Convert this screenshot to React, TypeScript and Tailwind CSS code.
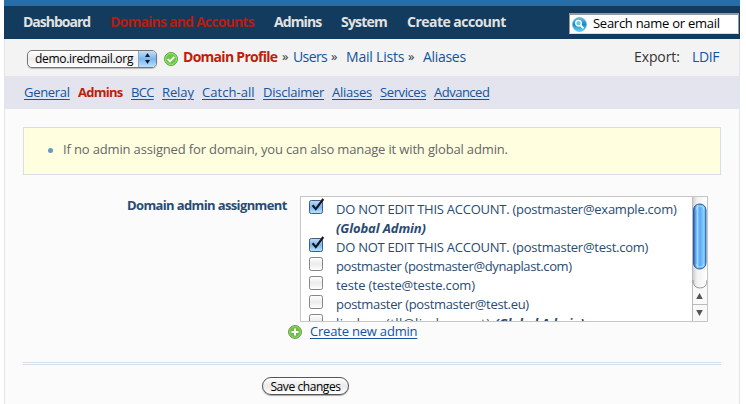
import React from "react";

function Check({ on }: { on?: boolean }) {
  return (
    <svg width="20" height="19" viewBox="0 0 20 19" className="shrink-0">
      <defs>
        <linearGradient id="boxOn" x1="0" y1="0" x2="0" y2="1">
          <stop offset="0" stopColor="#c3dcf3" />
          <stop offset="0.5" stopColor="#7db5ea" />
          <stop offset="1" stopColor="#b9eaff" />
        </linearGradient>
        <linearGradient id="boxOff" x1="0" y1="0" x2="0" y2="1">
          <stop offset="0" stopColor="#ffffff" />
          <stop offset="0.5" stopColor="#ececec" />
          <stop offset="1" stopColor="#ffffff" />
        </linearGradient>
      </defs>
      <rect x="0.5" y="3.5" width="13" height="13" rx="1.8" fill={on ? "url(#boxOn)" : "url(#boxOff)"} stroke={on ? "#435b86" : "#858585"} />
      {on && <path d="M3.6 8.3 6.8 12.1 14.3 2" fill="none" stroke="#10151f" strokeWidth="2.1" />}
    </svg>
  );
}

const accounts = [
  { text: "DO NOT EDIT THIS ACCOUNT. (postmaster@example.com)", on: true, global: true, cls: "tracking-[-0.25px]" },
  { text: "DO NOT EDIT THIS ACCOUNT. (postmaster@test.com)", on: true, cls: "tracking-[-0.25px]" },
  { text: "postmaster (postmaster@dynaplast.com)", cls: "tracking-[-0.38px]" },
  { text: "teste (teste@teste.com)", cls: "tracking-[-0.15px]" },
  { text: "postmaster (postmaster@test.eu)", cls: "tracking-[-0.32px]" },
];

function Tab({ w, children, active }: { w: string; children: string; active?: boolean }) {
  return (
    <span className={`${w} shrink-0 ${active ? "font-bold text-[#bf1d09]" : "text-[#0f55a0] underline underline-offset-2"}`}>{children}</span>
  );
}

export default function App() {
  return (
    <div className="h-[404px] w-[746px] overflow-hidden whitespace-nowrap bg-white pl-1 font-['Open_Sans','Noto_Sans',sans-serif] text-[13px] leading-[19px] text-[#294b72]">
      <div className="h-[6px] w-[736px] bg-[#286da5]" />
      <header className="flex h-[33px] w-[736px] items-center bg-[#123b5d] text-[14px] font-bold text-[#e2e2e2]">
        <nav className="flex pb-[2px] pl-[19px]">
          <span className="w-[87px] tracking-[-1px]">Dashboard</span>
          <span className="w-[164px] tracking-[-0.79px] text-[#b71c10]">Domains and Accounts</span>
          <span className="w-[67px] tracking-[-0.9px]">Admins</span>
          <span className="w-[66px] tracking-[-0.8px]">System</span>
          <span className="w-[162px] tracking-[-0.52px]">Create account</span>
        </nav>
        <div className="mt-[2px] flex h-[21px] w-[170px] items-center border border-t-2 border-[#999] border-b-[#ddd] bg-white pl-[2px] text-[13px] font-normal text-black">
          <svg width="15" height="15" viewBox="0 0 15 15" className="mr-[6px]">
            <defs>
              <linearGradient id="find" x1="0" y1="0" x2="0" y2="1">
                <stop offset="0" stopColor="#72b9dc" />
                <stop offset="0.5" stopColor="#188bc6" />
                <stop offset="1" stopColor="#65d6fa" />
              </linearGradient>
            </defs>
            <circle cx="7.5" cy="7.5" r="7" fill="url(#find)" stroke="#5eb4d8" strokeWidth=".7" />
            <circle cx="6.5" cy="6.2" r="2.8" fill="#71c7ed" stroke="white" strokeWidth="1.3" />
            <path d="m8.7 8.5 2.8 2.9" stroke="white" strokeWidth="1.8" />
          </svg>
          <span className="pb-[2px] tracking-[-0.27px]">Search name or email</span>
        </div>
      </header>

      <div className="w-[736px] border-x border-[#dfe4ee] bg-[#fbfbfc]">
        <div className="flex h-[37px] items-center bg-[#f3f3f3] text-[14px] text-[#333]">
          <div className="ml-[22px] mt-[2px] flex h-[18px] w-[130px] items-center overflow-hidden rounded-[5px] border border-[#777] bg-linear-to-b from-white via-[#ededed] to-white text-[12px] text-black shadow-[0_1px_1px_#bbb]">
            <span className="flex-1 pb-px pl-[7px] tracking-[-0.3px]">demo.iredmail.org</span>
            <span className="flex h-[18px] w-[18px] items-center justify-center border-l border-[#88a9cc] bg-linear-to-b from-[#cfe3f6] via-[#78b5ee] to-[#bfe9ff]">
              <svg width="7" height="11" viewBox="0 0 7 11"><path d="M3.5 0 6 4H1zM3.5 11 6 7H1z" fill="#111b29" /></svg>
            </span>
          </div>
          <svg width="14" height="14" viewBox="0 0 14 14" className="ml-[7px] mt-[3px]">
            <circle cx="7" cy="7" r="6.5" fill="#6fc646" stroke="#4eae36" />
            <circle cx="7" cy="7" r="5.5" fill="none" stroke="#b6e79e" strokeWidth=".7" />
            <path d="m3.7 7 2.3 2.4 4.3-4.6" fill="none" stroke="white" strokeWidth="1.8" />
          </svg>
          <div className="flex pb-[2px] pl-[5px]">
            <span className="w-[99px] font-bold tracking-[-0.72px] text-[#bf1d09]">Domain Profile</span>
            <span className="w-[11px] text-[13px]">»</span>
            <span className="w-[38px] tracking-[-0.6px] text-[#0f55a0]">Users</span>
            <span className="w-[15px] text-[13px]">»</span>
            <span className="w-[62px] tracking-[-0.2px] text-[#0f55a0]">Mail Lists</span>
            <span className="w-[15px] text-[13px]">»</span>
            <span className="w-[211px] tracking-[-0.3px] text-[#0f55a0]">Aliases</span>
            <span className="w-[58px] tracking-[-0.1px]">Export:</span>
            <span className="tracking-[-0.4px] text-[#0f55a0]">LDIF</span>
          </div>
        </div>
        <div className="flex h-[33px] items-center bg-[#e3e4ed] pl-[19px]">
          <Tab w="w-[54px] tracking-[-0.3px]">General</Tab>
          <Tab w="w-[53px] tracking-[-0.75px]" active>Admins</Tab>
          <Tab w="w-[31px] tracking-[-0.7px]">BCC</Tab>
          <Tab w="w-[40px] tracking-[-0.1px]">Relay</Tab>
          <Tab w="w-[61px] tracking-[0.05px]">Catch-all</Tab>
          <Tab w="w-[69px] tracking-[-0.25px]">Disclaimer</Tab>
          <Tab w="w-[48px] tracking-[-0.25px]">Aliases</Tab>
          <Tab w="w-[54px] tracking-[-0.4px]">Services</Tab>
          <Tab w="w-[60px] tracking-[-0.5px]">Advanced</Tab>
        </div>

        <main className="h-[295px] px-[18px] pt-[18px]">
          <div className="flex h-[48px] items-center border border-[#d7dee7] bg-[#ffffe0] pl-[24px] text-[#666]">
            <span className="mb-[2px] mr-[10px] h-[5px] w-[5px] rounded-full bg-[#6799c2]" />
            <span className="pb-[3px] tracking-[-0.15px]">If no admin assigned for domain, you can also manage it with global admin.</span>
          </div>
          <div className="mt-[21px] flex">
            <span className="ml-[104px] w-[173px] font-bold tracking-[-0.63px]">Domain admin assignment</span>
            <div className="flex h-[126px] w-[408px] overflow-hidden border border-[#c6c6c6] bg-white">
              <div className="flex-1 overflow-hidden pl-[8px]">
                {accounts.map((a) => (
                  <div key={a.text} className={`flex ${a.global ? "h-[38px]" : "h-[19px]"}`}>
                    <div className="w-[27px] shrink-0"><Check on={a.on} /></div>
                    <div className={`pt-[3px] ${a.cls}`}>
                      {a.text}
                      {a.global && <div className="font-bold italic tracking-[-0.1px]">(Global Admin)</div>}
                    </div>
                  </div>
                ))}
                <div className="flex">
                  <div className="w-[27px] shrink-0"><Check /></div>
                  <div className="pt-[3px] tracking-[0.5px]">lindsay (tll@lindsay.net) <b className="italic tracking-[-0.1px]">(Global Admin)</b></div>
                </div>
              </div>
              <svg width="15" height="124" viewBox="0 0 15 124" className="shrink-0">
                <defs>
                  <linearGradient id="track">
                    <stop offset="0" stopColor="#c9c9c9" />
                    <stop offset=".35" stopColor="#f2f2f2" />
                    <stop offset="1" stopColor="#fff" />
                  </linearGradient>
                  <linearGradient id="thumb">
                    <stop offset="0" stopColor="#1659c4" />
                    <stop offset=".18" stopColor="#63a9ed" />
                    <stop offset=".32" stopColor="#a2d4fa" />
                    <stop offset=".5" stopColor="#55a9f4" />
                    <stop offset=".85" stopColor="#8bd2ff" />
                    <stop offset="1" stopColor="#337ac4" />
                  </linearGradient>
                </defs>
                <path d="M0 0h15v124H0z" fill="url(#track)" />
                <path d="M.5 0v124" stroke="#bbb" />
                <path d="M1 83Q1 91 8 91T15 83V124H1z" fill="#f9f9f9" />
                <path d="M1 83Q1 91 8 91T15 83" fill="none" stroke="#999" />
                <rect x="1.5" y="7" width="12.5" height="65" rx="6" fill="url(#thumb)" stroke="#305b98" />
                <path d="M4 13Q4 9 8 9t4 4M4 67q1 3 4 3t4-3" fill="none" stroke="#bceaff" opacity=".65" />
                <path d="M1 107.5h14" stroke="#bbb" />
                <path d="m7.5 96 3.3 6H4.2zM7.5 119l3.3-6H4.2z" fill="#555" />
              </svg>
            </div>
          </div>
          <div className="flex h-[19px] items-center pl-[265px]">
            <svg width="14" height="14" viewBox="0 0 14 14" className="mr-[8px]">
              <circle cx="7" cy="7" r="6.5" fill="#70bc42" stroke="#619f4c" />
              <circle cx="7" cy="7" r="5.5" fill="none" stroke="#a6d681" strokeWidth=".8" />
              <path d="M7 3.5v7M3.5 7h7" stroke="white" strokeWidth="2" />
            </svg>
            <span className="tracking-[-0.2px] text-[#0f55a0] underline underline-offset-2">Create new admin</span>
          </div>
          <div className="mt-[21px] h-[3px] border-y border-[#d5dee7]" />
          <button className="ml-[239px] mt-[12px] flex h-[18px] w-[87px] items-center justify-center rounded-full border border-[#555] bg-linear-to-b from-white via-[#e9e9e9] to-white text-[12px] tracking-[-0.42px] text-black shadow-[0_1px_1px_#aaa]">Save changes</button>
        </main>
      </div>
    </div>
  );
}
